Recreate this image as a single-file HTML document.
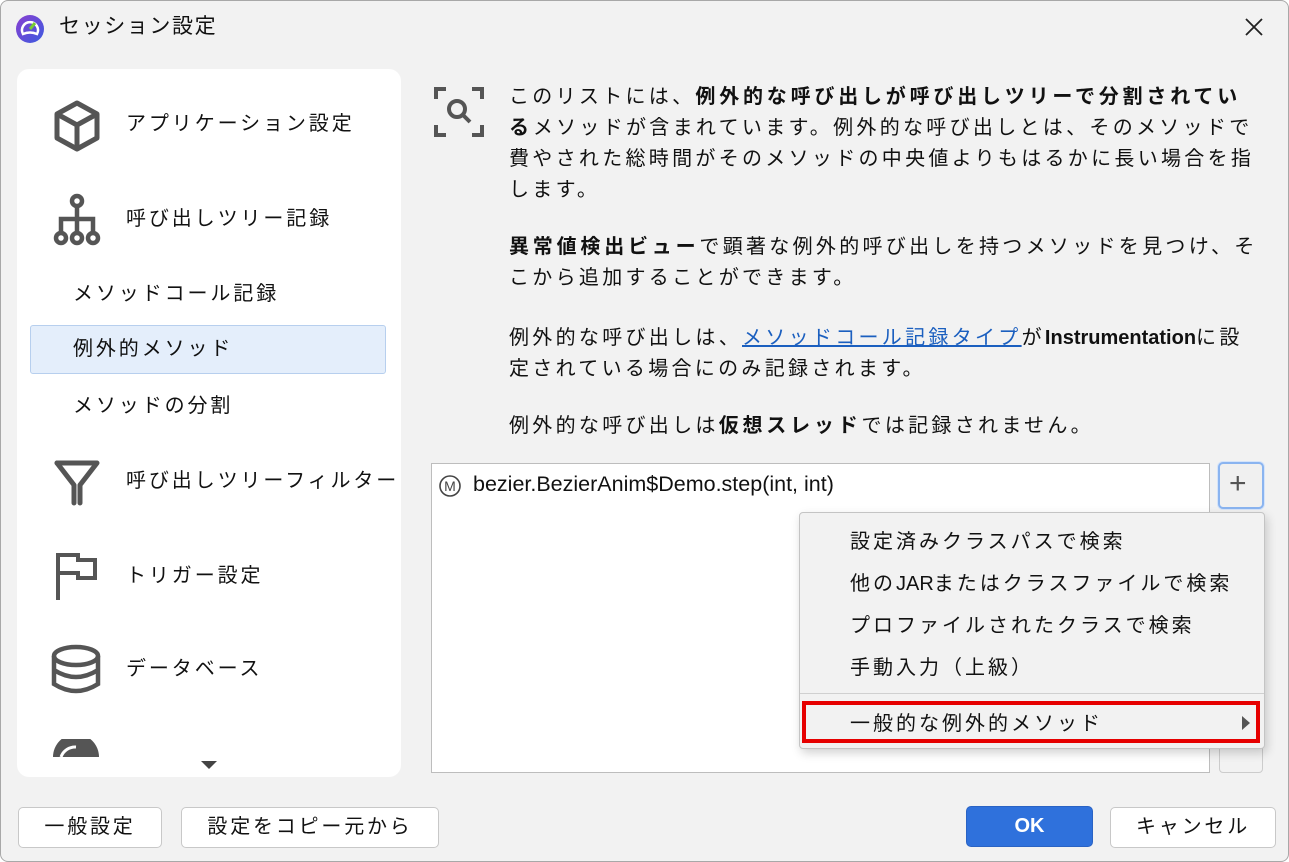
<!DOCTYPE html>
<html><head><meta charset="utf-8"><style>
*{margin:0;padding:0;box-sizing:border-box}
body{width:1289px;height:862px;overflow:hidden;background:#fff;font-family:"Liberation Sans","Noto Sans CJK JP",sans-serif;color:#111;position:relative}
.win{position:absolute;left:0;top:0;width:1289px;height:862px;background:#f2f2f2;border:1px solid #a8a8a8;border-radius:8px}
.a{position:absolute;white-space:nowrap}
.side{position:absolute;left:16px;top:68px;width:384px;height:708px;background:#fff;border-radius:12px;overflow:hidden}
.t{font-size:20px;line-height:24px;letter-spacing:2.9px}
.p{position:absolute;left:508px;width:760px;font-size:20px;line-height:31px;letter-spacing:3.3px}
.p b{letter-spacing:3.8px}
.btn{position:absolute;height:41px;border:1px solid #c8c8c8;border-radius:5px;background:#fff;font-size:20px;text-align:center;line-height:39px;letter-spacing:2.8px}
.mi{position:absolute;left:50px;font-size:20px;letter-spacing:3px}
</style></head><body>
<div class="win">
<svg class="a" style="left:14px;top:13px" width="30" height="30" viewBox="0 0 30 30"><defs><linearGradient id="g" x1="0" y1="0" x2="1" y2="1"><stop offset="0" stop-color="#8a3fd0"/><stop offset="1" stop-color="#3b5be0"/></linearGradient></defs><circle cx="15" cy="15" r="14" fill="url(#g)"/><path d="M8 20 A8 8 0 1 1 22 20 Q15 17 8 20Z" fill="none" stroke="#fff" stroke-width="2.5"/><path d="M15 15 L20 9" stroke="#7c3" stroke-width="3"/></svg>
<div class="a t" style="left:58px;top:14px;font-size:21px;letter-spacing:1.6px">セッション設定</div>
<svg class="a" style="left:1243px;top:16px" width="20" height="20"><path d="M2 2L18 18M18 2L2 18" stroke="#222" stroke-width="1.8"/></svg>

<div class="side">
<svg class="a" style="left:34px;top:30px" width="52" height="54" viewBox="0 0 52 54"><path d="M26 4L46 15V39L26 50L6 39V15Z M6 15L26 26L46 15 M26 26V50" fill="none" stroke="#555" stroke-width="5" stroke-linejoin="round"/></svg>
<div class="a t" style="left:109px;top:43px">アプリケーション設定</div>
<svg class="a" style="left:32px;top:122px" width="56" height="56" viewBox="0 0 56 56"><g fill="none" stroke="#555" stroke-width="4.5"><circle cx="28" cy="10" r="5"/><path d="M28 15V28M12 42V28H44V42M28 28V42"/><circle cx="12" cy="47" r="5"/><circle cx="28" cy="47" r="5"/><circle cx="44" cy="47" r="5"/></g></svg>
<div class="a t" style="left:109px;top:138px">呼び出しツリー記録</div>
<div class="a t" style="left:56px;top:213px">メソッドコール記録</div>
<div class="a" style="left:13px;top:256px;width:356px;height:49px;background:#e4eefb;border:1px solid #b7cfee;border-radius:3px"></div>
<div class="a t" style="left:56px;top:268px">例外的メソッド</div>
<div class="a t" style="left:56px;top:325px">メソッドの分割</div>
<svg class="a" style="left:36px;top:390px" width="50" height="50" viewBox="0 0 50 50"><path d="M4 4H44L27 26V44" fill="none" stroke="#555" stroke-width="5" stroke-linejoin="round" stroke-linecap="round"/><path d="M4 4L21 26V44" fill="none" stroke="#555" stroke-width="5" stroke-linejoin="round" stroke-linecap="round"/></svg>
<div class="a t" style="left:109px;top:400px">呼び出しツリーフィルター</div>
<svg class="a" style="left:38px;top:483px" width="50" height="50" viewBox="0 0 50 50"><path d="M3 48V3H23V8H40V26H23V21H3" fill="none" stroke="#555" stroke-width="4"/></svg>
<div class="a t" style="left:109px;top:495px">トリガー設定</div>
<svg class="a" style="left:33px;top:575px" width="52" height="52" viewBox="0 0 52 52"><g fill="none" stroke="#555" stroke-width="4.5"><ellipse cx="26" cy="12" rx="22" ry="9"/><path d="M4 12V40Q26 54 48 40V12M4 26Q26 40 48 26"/></g></svg>
<div class="a t" style="left:109px;top:588px">データベース</div>
<svg class="a" style="left:34px;top:670px" width="50" height="18" viewBox="0 0 50 18"><path d="M2 18A23 23 0 0 1 48 18Z" fill="#555"/><path d="M10 18A15 15 0 0 1 25 8" stroke="#fff" stroke-width="3" fill="none"/></svg>
<svg class="a" style="left:184px;top:692px" width="16" height="10"><path d="M0 0H16L8 8Z" fill="#444"/></svg>
</div>

<svg class="a" style="left:433px;top:86px" width="50" height="50" viewBox="0 0 50 50"><g fill="none" stroke="#555" stroke-width="4"><path d="M2 12V2H12M38 2H48V12M2 38V48H12M48 38V48H38"/><circle cx="23" cy="22" r="8"/><path d="M29 28L36 35"/></g></svg>
<div class="p" style="top:81px">このリストには、<b>例外的な呼び出しが呼び出しツリーで分割されてい<br>る</b>メソッドが含まれています。例外的な呼び出しとは、そのメソッドで<br>費やされた総時間がそのメソッドの中央値よりもはるかに長い場合を指<br>します。</div>
<div class="p" style="top:231px"><b>異常値検出ビュー</b>で顕著な例外的呼び出しを持つメソッドを見つけ、そ<br>こから追加することができます。</div>
<div class="p" style="top:322px">例外的な呼び出しは、<span style="color:#1b5fbf;text-decoration:underline">メソッドコール記録タイプ</span>が<b style="letter-spacing:0">Instrumentation</b>に設<br>定されている場合にのみ記録されます。</div>
<div class="p" style="top:410px">例外的な呼び出しは<b>仮想スレッド</b>では記録されません。</div>

<div class="a" style="left:430px;top:462px;width:779px;height:310px;background:#fff;border:1px solid #bdbdbd"></div>
<svg class="a" style="left:437px;top:473px" width="24" height="24"><circle cx="12" cy="12" r="10" fill="none" stroke="#444" stroke-width="1.6"/><text x="12" y="17" font-size="14" text-anchor="middle" fill="#444" font-family="Liberation Sans">M</text></svg>
<div class="a" style="left:472px;top:471px;font-size:21.5px;letter-spacing:0">bezier.BezierAnim$Demo.step(int, int)</div>
<div class="a" style="left:1217px;top:461px;width:46px;height:47px;border:2px solid #8ab4f0;border-radius:5px;background:#f0f0f0;box-shadow:0 0 0 1px #d5e4fa"></div>
<div class="a" style="left:1228px;top:466px;font-size:30px;color:#555;font-weight:300">+</div>
<div class="a" style="left:1218px;top:740px;width:44px;height:32px;border:1px solid #ccc;border-radius:4px;background:#f2f2f2"></div>

<div class="a" style="left:798px;top:511px;width:466px;height:237px;background:#f2f2f2;border:1px solid #c4c4c4;border-radius:4px;box-shadow:2px 4px 10px rgba(0,0,0,0.18)">
<div class="mi" style="top:12px">設定済みクラスパスで検索</div>
<div class="mi" style="top:54px">他の<span style="letter-spacing:0">JAR</span>またはクラスファイルで検索</div>
<div class="mi" style="top:96px">プロファイルされたクラスで検索</div>
<div class="mi" style="top:138px">手動入力（上級）</div>
<div class="a" style="left:0;top:180px;width:464px;height:1px;background:#d0d0d0"></div>
<div class="a" style="left:2px;top:188px;width:458px;height:42px;border:4px solid #e60000"></div>
<div class="mi" style="top:194px">一般的な例外的メソッド</div>
<svg class="a" style="left:442px;top:203px" width="8" height="14"><path d="M0 0L8 7L0 14Z" fill="#555"/></svg>
</div>

<div class="btn" style="left:17px;top:806px;width:144px">一般設定</div>
<div class="btn" style="left:180px;top:806px;width:258px">設定をコピー元から</div>
<div class="btn" style="left:965px;top:805px;width:127px;background:#2f71dc;border-color:#2a63c4;color:#fff;font-weight:bold;letter-spacing:0">OK</div>
<div class="btn" style="left:1109px;top:806px;width:166px">キャンセル</div>
</div>
</body></html>
